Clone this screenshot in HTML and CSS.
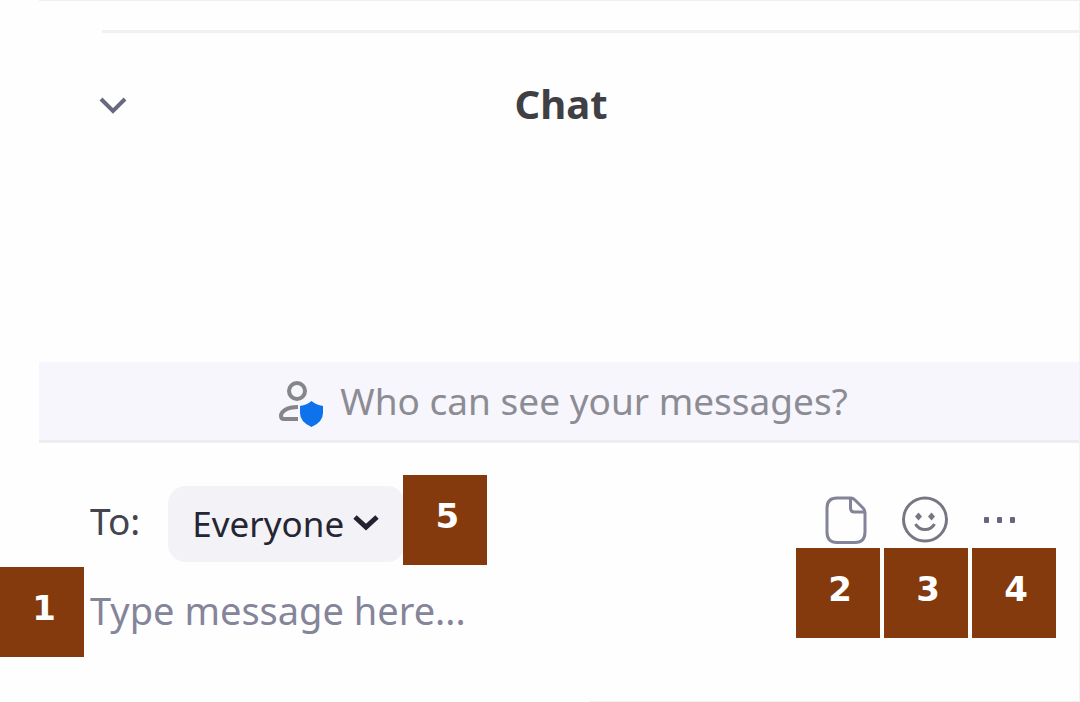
FILE: index.html
```html
<!DOCTYPE html>
<html lang="en">
<head>
  <meta charset="utf-8">
  <meta name="viewport" content="width=device-width, initial-scale=1">
  <title>Chat</title>
  <link rel="stylesheet" href="styles.css">
</head>
<body>
  <main class="chat-panel">
    <hr class="divider">
    <header class="chat-header">
      <button class="icon-btn collapse-btn" type="button" aria-label="Collapse chat">
        <svg width="28" height="18" viewBox="0 0 28 18" fill="none" stroke="#686880" stroke-width="4">
          <path d="M2 2 L14 14 L26 2" />
        </svg>
      </button>
      <h1>Chat</h1>
    </header>

    <section class="messages"></section>

    <a class="notice" href="#">
      <svg width="46" height="54" viewBox="0 -6 46 54" fill="none" stroke="#85858c" stroke-width="4">
        <circle cx="19" cy="11" r="8" />
        <path d="M20 27 C8 27 3 32 3 36 Q3 39 6 39 H20" />
        <path d="M33.500 21 Q38 25 45 26 V33 Q45 42 33.500 47 Q22 42 22 33 V26 Q29 25 33.500 21 Z" fill="#0e72ed" stroke="none" />
      </svg>
      <span>Who can see your messages?</span>
    </a>

    <form class="compose">
      <div class="compose-bar">
        <label for="recipient">To:</label>
        <div class="recipient">
          <select id="recipient">
            <option>Everyone</option>
          </select>
          <svg class="arrow" width="26" height="18" viewBox="0 0 26 18" fill="none" stroke="#222230" stroke-width="5">
            <path d="M2 3 L13 13 L24 3" />
          </svg>
          <span class="callout callout-recipient">5</span>
        </div>

        <div class="tools">
          <button class="icon-btn" type="button" aria-label="File">
            <svg width="42" height="48" viewBox="0 0 42 48" fill="none" stroke="#83839a" stroke-width="3" stroke-linejoin="round">
              <path d="M12 2 H26 Q28 2 30 4 L38 12 Q40 14 40 17 V36 Q40 46.500 30 46.500 H12 Q2 46.500 2 36 V12 Q2 2 12 2 Z" />
              <path d="M25.500 2 V12 Q25.500 16 29.500 16 H39" />
            </svg>
          </button>
          <button class="icon-btn" type="button" aria-label="Emoji">
            <svg width="48" height="48" viewBox="0 0 48 48" fill="none" stroke="#777784" stroke-width="3">
              <circle cx="24" cy="23.500" r="21.500" />
              <path d="M14.500 28 Q17.500 33.500 24 33.500 Q30.500 33.500 33.500 28" />
              <path d="M17.500 16.500 L21 20.500 L17.500 24.500 L14 20.500 Z M30.500 16.500 L34 20.500 L30.500 24.500 L27 20.500 Z" fill="#777784" stroke="none" />
            </svg>
          </button>
          <button class="icon-btn" type="button" aria-label="More">
            <svg width="34" height="48" viewBox="0 0 34 48" fill="#66667e">
              <rect x="1" y="21" width="5" height="6" rx="1" />
              <rect x="14" y="21" width="5" height="6" rx="1" />
              <rect x="27" y="21" width="5" height="6" rx="1" />
            </svg>
          </button>
          <div class="tool-callouts">
            <span class="callout">2</span>
            <span class="callout">3</span>
            <span class="callout">4</span>
          </div>
        </div>
      </div>

      <div class="message-row">
        <span class="callout callout-message">1</span>
        <input type="text" placeholder="Type message here..." aria-label="Message">
      </div>
    </form>
    <hr class="divider-bottom">
  </main>
</body>
</html>
```

FILE: styles.css
```css
* {
  box-sizing: border-box;
}

body {
  margin: 0;
  background: #fefefe;
  font-family: "Noto Sans", "Open Sans", sans-serif;
  font-size: 38px;
  color: #44444f;
}

.chat-panel {
  display: flex;
  flex-direction: column;
  min-height: 100vh;
  margin-left: 39px;
  border-top: 1px solid #eeeeee;
  border-right: 1px solid #f2f2f2;
}

.divider {
  width: calc(100% - 63px);
  height: 3px;
  margin: 29px 0 0 63px;
  border: none;
  background: #f1f1f3;
}

.divider-bottom {
  width: 47%;
  height: 1px;
  margin: 0 0 0 auto;
  border: none;
  background: #eeeeee;
}

.chat-header {
  display: grid;
  grid-template-columns: 1fr auto 1fr;
  align-items: center;
  height: 146px;
  padding: 0 56px 0 60px;
}

.chat-header h1 {
  margin: 0;
  padding-bottom: 4px;
  font-size: 40px;
  line-height: 48px;
  color: #404044;
}

.icon-btn {
  display: flex;
  padding: 0;
  border: none;
  background: none;
  cursor: pointer;
}

.messages {
  flex: 1;
}

.notice {
  display: flex;
  justify-content: center;
  align-items: center;
  gap: 16px;
  height: 81px;
  padding-left: 8px;
  background: #f6f6fc;
  border-bottom: 3px solid #ededf1;
  color: #8c8c94;
  font-size: 37px;
  line-height: 48px;
  text-decoration: none;
}

.compose {
  height: 258px;
  padding: 43px 62px 0 51px;
}

.compose-bar {
  display: flex;
  align-items: center;
  line-height: 48px;
}

.compose-bar label {
  padding-bottom: 6px;
  font-size: 37px;
}

.recipient {
  position: relative;
  margin-left: 28px;
}

.recipient select {
  appearance: none;
  width: 237px;
  height: 76px;
  padding: 0 48px 0 24px;
  border: none;
  border-radius: 18px;
  background: #f2f2f7;
  color: #252533;
  font: inherit;
  font-size: 35px;
}

.recipient .arrow {
  position: absolute;
  top: 28px;
  right: 26px;
  pointer-events: none;
}

.tools {
  position: relative;
  display: flex;
  gap: 34px;
  margin: 0 0 8px auto;
}

/* numbered markers over the controls */
.callout {
  display: flex;
  justify-content: center;
  align-items: center;
  width: 84px;
  height: 90px;
  padding: 0 0 8px 4px;
  background: #843a0c;
  color: #ffffff;
  font: bold 34px "DejaVu Sans", Verdana, sans-serif;
}

.callout-recipient {
  position: absolute;
  top: -11px;
  left: 235px;
}

.callout-message {
  position: absolute;
  top: -15px;
  right: 100%;
  margin-right: 6px;
}

.tool-callouts {
  position: absolute;
  top: 52px;
  right: -39px;
  display: flex;
  gap: 4px;
}

.message-row {
  position: relative;
  width: 50%;
  margin-top: 20px;
}

.message-row input {
  display: block;
  width: 100%;
  height: 56px;
  padding: 0;
  border: none;
  outline: none;
  background: none;
  font: inherit;
}

.message-row input::placeholder {
  color: #85859a;
  opacity: 1;
}
```
